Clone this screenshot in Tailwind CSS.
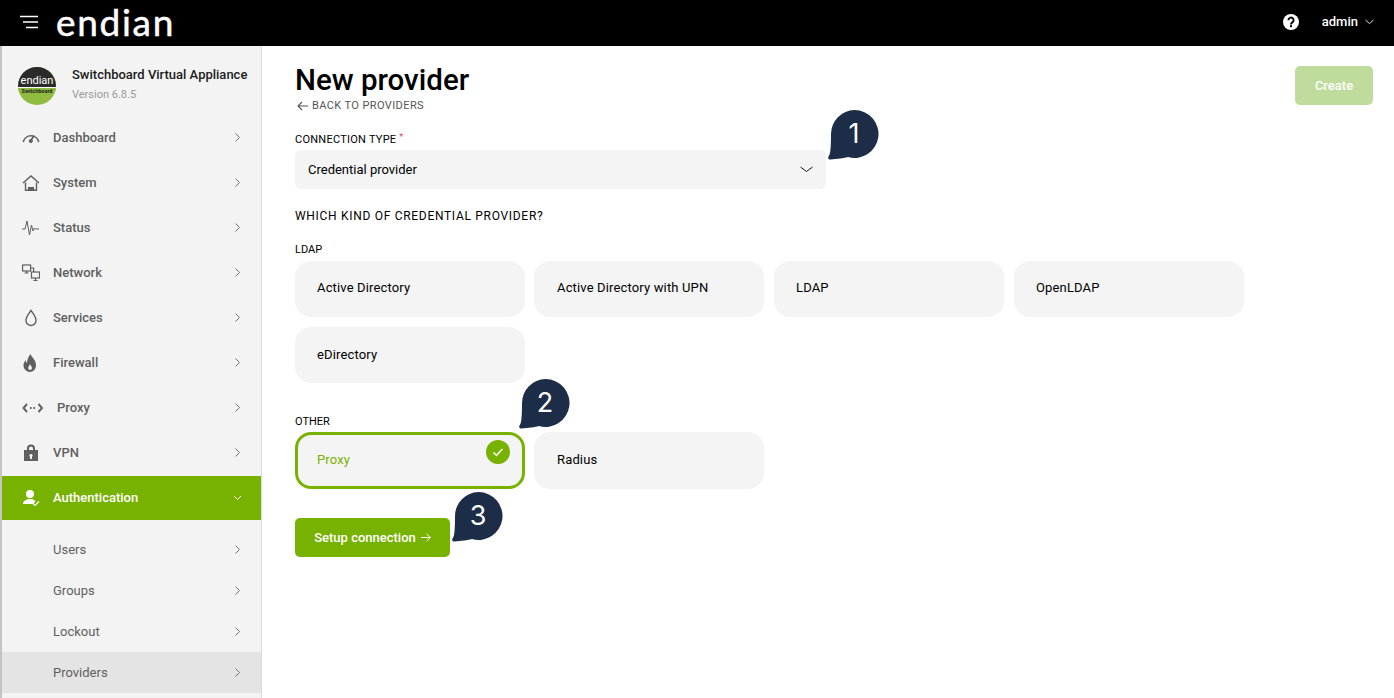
<!DOCTYPE html>
<html lang="en">
<head>
  <meta charset="UTF-8">
  <title>New provider - Endian Switchboard</title>
  <script src="https://cdn.jsdelivr.net/npm/@tailwindcss/browser@4"></script>
</head>
<body class="h-[698px] overflow-hidden bg-white font-['Roboto',sans-serif] text-black">
  <!-- Top bar -->
  <header class="h-[46px] pb-[3px] bg-black flex items-center text-white">
    <svg class="ml-[20px] w-[18px] h-[14px]" viewBox="0 0 18 14" fill="none" stroke="#fff" stroke-width="1.5"><path d="M0 1.5h18M3 7h15M6 12.5h12"/></svg>
    <span class="ml-[18px] text-[37px] leading-[37px] font-['Lato',sans-serif] font-normal tracking-[1.7px] [-webkit-text-stroke:0.5px_white]">endian</span>
    <div class="ml-auto flex items-center">
      <svg class="w-[16px] h-[16px]" viewBox="0 0 16 16"><circle cx="8" cy="8" r="8" fill="#fff"/><path d="M5.4 6.2a2.6 2.6 0 1 1 4 2.2c-.9.6-1.4 1-1.4 2" fill="none" stroke="#000" stroke-width="1.9"/><rect x="7" y="11.2" width="2" height="2" fill="#000"/></svg>
      <span class="ml-[23px] text-[13px] font-medium">admin</span>
      <svg class="ml-[7px] mr-[20px] w-[9px] h-[6px]" viewBox="0 0 9 6" fill="none" stroke="#ddd" stroke-width="1"><path d="M.5 1l4 3.6 4-3.6"/></svg>
    </div>
  </header>

  <div class="flex h-[652px]">
    <!-- Sidebar -->
    <aside class="w-[262px] shrink-0 bg-[#f3f3f3] border-l-2 border-r border-l-[#c4c4c4] border-r-[#dcdcdc] text-[#5f5f5f] text-[13px]">
      <div class="h-[69px] flex items-start pt-[21px] pl-[16px]">
        <div class="relative w-[38px] h-[38px] rounded-full overflow-hidden bg-[#8fbc3f] shrink-0">
          <div class="h-[20px] bg-[#2b2b2b] flex items-end justify-center text-white text-[11px] leading-[13px]">endian</div>
          <div class="h-[6px] bg-[#8fbc3f] text-[#222] text-[5.5px] leading-[6px] font-bold text-center border-t border-white">Switchboard</div>
        </div>
        <div class="ml-[16px]">
          <div class="text-[13px] leading-[16px] font-medium text-[#1c1c1c] whitespace-nowrap">Switchboard Virtual Appliance</div>
          <div class="mt-[5px] text-[11px] leading-[14px] text-[#9a9a9a]">Version 6.8.5</div>
        </div>
      </div>
      <nav class="font-medium">
        <a class="h-[45px] flex items-center pl-[20px] pr-[21px]">
          <svg class="w-[18px] h-[18px]" viewBox="0 0 18 18" fill="none" stroke="#5f5f5f"><path d="M1.2 13a8 8 0 0 1 15.6 0" stroke-width="1.6"/><path d="M12 6.5l-3 5" stroke-width="1.6"/><circle cx="8.8" cy="12" r="1.6" fill="#5f5f5f"/></svg>
          <span class="ml-[13px]">Dashboard</span>
          <svg class="ml-auto w-[5px] h-[9px]" viewBox="0 0 5 9" fill="none" stroke="#707070" stroke-width="1"><path d="M.5.5l4 4-4 4"/></svg>
        </a>
        <a class="h-[45px] flex items-center pl-[20px] pr-[21px]">
          <svg class="w-[18px] h-[18px]" viewBox="0 0 18 18" fill="none" stroke="#5f5f5f" stroke-width="1.4"><path d="M1 9l8-7 8 7"/><path d="M3.5 8.5v7.8h11V8.500"/><rect x="6" y="13" width="6" height="3" fill="#5f5f5f" stroke="none"/></svg>
          <span class="ml-[13px]">System</span>
          <svg class="ml-auto w-[5px] h-[9px]" viewBox="0 0 5 9" fill="none" stroke="#707070" stroke-width="1"><path d="M.5.5l4 4-4 4"/></svg>
        </a>
        <a class="h-[45px] flex items-center pl-[20px] pr-[21px]">
          <svg class="w-[18px] h-[18px]" viewBox="0 0 18 18" fill="none" stroke="#5f5f5f" stroke-width="1"><path d="M0 10h3l2-8 2.500 14 2-10 1.500 6 1.500-3 1 1h3.500"/></svg>
          <span class="ml-[13px]">Status</span>
          <svg class="ml-auto w-[5px] h-[9px]" viewBox="0 0 5 9" fill="none" stroke="#707070" stroke-width="1"><path d="M.5.5l4 4-4 4"/></svg>
        </a>
        <a class="h-[45px] flex items-center pl-[20px] pr-[21px]">
          <svg class="w-[18px] h-[18px]" viewBox="0 0 18 18" fill="none" stroke="#5f5f5f" stroke-width="1.200"><rect x=".6" y="1" width="8" height="6"/><path d="M2.500 9h4M4.500 7v2"/><rect x="9.500" y="8" width="8" height="6"/><path d="M11.500 16.500h4M13.500 14v2.500M8.600 4h3v4"/></svg>
          <span class="ml-[13px]">Network</span>
          <svg class="ml-auto w-[5px] h-[9px]" viewBox="0 0 5 9" fill="none" stroke="#707070" stroke-width="1"><path d="M.5.5l4 4-4 4"/></svg>
        </a>
        <a class="h-[45px] flex items-center pl-[20px] pr-[21px]">
          <svg class="w-[18px] h-[18px]" viewBox="0 0 18 18" fill="none" stroke="#5f5f5f" stroke-width="1.400"><path d="M9 1.500c2 3 5 6 5 10a5 5 0 0 1-10 0c0-4 3-7 5-10z"/></svg>
          <span class="ml-[13px]">Services</span>
          <svg class="ml-auto w-[5px] h-[9px]" viewBox="0 0 5 9" fill="none" stroke="#707070" stroke-width="1"><path d="M.5.5l4 4-4 4"/></svg>
        </a>
        <a class="h-[45px] flex items-center pl-[20px] pr-[21px]">
          <svg class="-ml-[1px] mr-[1px] w-[18px] h-[18px]" viewBox="0 0 18 18" fill="#5f5f5f"><path d="M9.500 0c.5 3 5.500 5.500 5.500 11 0 4-2.500 7-6 7s-6.500-3-6.500-6.500c0-2.500 1-4 2.300-5.500 0 1.500.4 2.500 1.200 3C6 6 7.500 2.500 9.500 0zM9 10c-.3 1.500-1.700 2-1.700 4 0 1.200.8 2 1.800 2s1.800-.8 1.800-2c0-1.800-1.500-2.500-1.900-4z"/></svg>
          <span class="ml-[13px]">Firewall</span>
          <svg class="ml-auto w-[5px] h-[9px]" viewBox="0 0 5 9" fill="none" stroke="#707070" stroke-width="1"><path d="M.5.5l4 4-4 4"/></svg>
        </a>
        <a class="h-[45px] flex items-center pl-[20px] pr-[21px]">
          <svg class="w-[22px] h-[18px]" viewBox="0 0 22 18" fill="none" stroke="#5f5f5f" stroke-width="1.900"><path d="M5 5L1.500 9 5 13M16.500 5l3.500 4-3.500 4"/><path d="M8 9h5.500" stroke-dasharray="1.600 1.800"/></svg>
          <span class="ml-[13px]">Proxy</span>
          <svg class="ml-auto w-[5px] h-[9px]" viewBox="0 0 5 9" fill="none" stroke="#707070" stroke-width="1"><path d="M.5.5l4 4-4 4"/></svg>
        </a>
        <a class="h-[46px] flex items-center pb-[1px] pl-[20px] pr-[21px]">
          <svg class="w-[18px] h-[18px]" viewBox="0 0 18 18" fill="#5f5f5f"><path fill-rule="evenodd" d="M5 6V4.500a4 4 0 0 1 8 0V6h3v11H2V6zm2 0h4V4.500a2 2 0 0 0-4 0zm2 4a1.500 1.500 0 0 0-1 2.700V15h2v-2.300A1.500 1.500 0 0 0 9 10z"/></svg>
          <span class="ml-[13px]">VPN</span>
          <svg class="ml-auto w-[5px] h-[9px]" viewBox="0 0 5 9" fill="none" stroke="#707070" stroke-width="1"><path d="M.5.5l4 4-4 4"/></svg>
        </a>
        <a class="h-[44px] flex items-center pl-[20px] pr-[21px] bg-[#78b200] text-white">
          <svg class="w-[18px] h-[18px]" viewBox="0 0 18 18" fill="#fff"><circle cx="8" cy="5" r="4"/><path d="M1 15c0-3 3-4 5-5h4c1.500.5 3 1.500 3.500 2.500L11 15z"/><path d="M11 14.500l2 2 4-4" fill="none" stroke="#fff" stroke-width="1.200"/></svg>
          <span class="ml-[13px]">Authentication</span>
          <svg class="ml-auto -mr-[2px] w-[9px] h-[6px]" viewBox="0 0 9 6" fill="none" stroke="#fff" stroke-width="1"><path d="M1 1l3.500 3.500L8 1"/></svg>
        </a>
      </nav>
      <div class="pt-[9px] font-normal">
        <a class="h-[41px] flex items-center pl-[51px] pr-[21px]">Users<svg class="ml-auto w-[5px] h-[9px]" viewBox="0 0 5 9" fill="none" stroke="#707070" stroke-width="1"><path d="M.5.5l4 4-4 4"/></svg></a>
        <a class="h-[41px] flex items-center pl-[51px] pr-[21px]">Groups<svg class="ml-auto w-[5px] h-[9px]" viewBox="0 0 5 9" fill="none" stroke="#707070" stroke-width="1"><path d="M.5.5l4 4-4 4"/></svg></a>
        <a class="h-[41px] flex items-center pl-[51px] pr-[21px]">Lockout<svg class="ml-auto w-[5px] h-[9px]" viewBox="0 0 5 9" fill="none" stroke="#707070" stroke-width="1"><path d="M.5.5l4 4-4 4"/></svg></a>
        <a class="h-[41px] flex items-center pl-[51px] pr-[21px] bg-[#e4e4e4]">Providers<svg class="ml-auto w-[5px] h-[9px]" viewBox="0 0 5 9" fill="none" stroke="#707070" stroke-width="1"><path d="M.5.5l4 4-4 4"/></svg></a>
      </div>
    </aside>

    <!-- Main -->
    <main class="relative flex-1 pl-[33px] pr-[21px]">
      <div class="flex items-start justify-between pt-[20px]">
        <div>
          <h1 class="-mt-[1px] text-[29.5px] leading-[30px] font-medium">New provider</h1>
          <a class="mt-[4px] flex items-center text-[11px] leading-[14px] text-[#555] tracking-[0.4px]">
            <svg class="mr-[4px] ml-[2px] w-[11px] h-[10px]" viewBox="0 0 11 10" fill="none" stroke="#555" stroke-width="1.100"><path d="M11 5H1M5 1L1 5l4 4"/></svg>BACK TO PROVIDERS
          </a>
        </div>
        <button class="w-[78px] h-[39px] rounded-[5px] bg-[#c0dc9c] text-white text-[13px] font-medium">Create</button>
      </div>

      <div class="mt-[19px] h-[16px] text-[11px] leading-[16px] tracking-[0.25px]">CONNECTION TYPE <span class="relative -top-[3px] text-[#e5484d] text-[9px]">*</span></div>
      <div class="mt-[2px] w-[531px] h-[39px] rounded-[6px] bg-[#f4f4f4] flex items-center pl-[13px] pr-[13px] text-[13px]">
        Credential provider
        <svg class="ml-auto w-[13px] h-[7px]" viewBox="0 0 13 7" fill="none" stroke="#111" stroke-width="1"><path d="M.5 1l6 4.500 6-4.500"/></svg>
      </div>

      <div class="mt-[19px] text-[12px] leading-[16px] tracking-[0.7px]">WHICH KIND OF CREDENTIAL PROVIDER?</div>
      <div class="mt-[18px] text-[11px] leading-[16px]">LDAP</div>
      <div class="mt-[3px] grid grid-cols-[239px_240px_240px_230px] gap-y-[10px] text-[13px] tracking-[0.15px]">
        <div class="w-[230px] h-[56px] rounded-[16px] bg-[#f4f4f4] flex items-center pb-[3px] pl-[22px]">Active Directory</div>
        <div class="w-[230px] h-[56px] rounded-[16px] bg-[#f4f4f4] flex items-center pb-[3px] pl-[23px]">Active Directory with UPN</div>
        <div class="w-[230px] h-[56px] rounded-[16px] bg-[#f4f4f4] flex items-center pb-[3px] pl-[22px]">LDAP</div>
        <div class="w-[230px] h-[56px] rounded-[16px] bg-[#f4f4f4] flex items-center pb-[3px] pl-[22px]">OpenLDAP</div>
        <div class="w-[230px] h-[56px] rounded-[16px] bg-[#f4f4f4] flex items-center pb-[1px] pl-[22px]">eDirectory</div>
      </div>

      <div class="mt-[31px] text-[11px] leading-[16px]">OTHER</div>
      <div class="mt-[2px] grid grid-cols-[239px_240px_240px_230px] text-[13px] tracking-[0.15px]">
        <div class="relative w-[230px] h-[57px] rounded-[16px] bg-[#f4f4f4] border-[3px] border-[#78b200] flex items-center pb-[2px] pl-[19px] text-[#78b200]">
          Proxy
          <svg class="absolute right-[12px] top-[5px] w-[24px] h-[24px]" viewBox="0 0 24 24"><circle cx="12" cy="12" r="12" fill="#78b200"/><path d="M7.500 12.500l3 3 6-6.500" fill="none" stroke="#fff" stroke-width="1.500"/></svg>
        </div>
        <div class="w-[230px] h-[57px] rounded-[16px] bg-[#f4f4f4] flex items-center pb-[2px] pl-[23px]">Radius</div>
      </div>

      <button class="mt-[29px] w-[155px] h-[39px] rounded-[5px] bg-[#78b200] text-white text-[13px] font-medium flex items-center justify-center gap-[5px]">Setup connection
        <svg class="w-[10px] h-[9px]" viewBox="0 0 10 9" fill="none" stroke="#fff" stroke-width="1"><path d="M0 4.500h9.200M5.500.7l3.800 3.800-3.800 3.800"/></svg>
      </button>

      <!-- Numbered callouts -->
      <div class="absolute left-[566px] top-[64px] w-[52px] h-[50px]">
        <svg class="absolute inset-0" width="52" height="50" viewBox="0 0 52 50"><path d="M26.500 0a24 24 0 1 1-6.500 47.100c-4 1-11 2.300-17.500 2.400-2.500 0-2.800-2-1.800-3.200 1.300-1.500 2.300-5 2.300-22.300A24 24 0 0 1 26.500 0z" fill="#1d2d47"/></svg>
        <span class="absolute left-[2px] top-0 w-[48px] h-[48px] flex items-center justify-center text-white text-[27px] font-['Inter',sans-serif]">1</span>
      </div>
      <div class="absolute left-[257px] top-[333px] w-[52px] h-[50px]">
        <svg class="absolute inset-0" width="52" height="50" viewBox="0 0 52 50"><path d="M26.500 0a24 24 0 1 1-6.500 47.100c-4 1-11 2.300-17.500 2.400-2.500 0-2.800-2-1.800-3.200 1.300-1.500 2.300-5 2.300-22.300A24 24 0 0 1 26.500 0z" fill="#1d2d47"/></svg>
        <span class="absolute left-[2px] top-0 w-[48px] h-[48px] flex items-center justify-center text-white text-[27px] font-['Inter',sans-serif]">2</span>
      </div>
      <div class="absolute left-[190px] top-[446px] w-[52px] h-[50px]">
        <svg class="absolute inset-0" width="52" height="50" viewBox="0 0 52 50"><path d="M26.500 0a24 24 0 1 1-6.500 47.100c-4 1-11 2.300-17.500 2.400-2.500 0-2.800-2-1.800-3.200 1.300-1.500 2.300-5 2.300-22.300A24 24 0 0 1 26.500 0z" fill="#1d2d47"/></svg>
        <span class="absolute left-[2px] top-0 w-[48px] h-[48px] flex items-center justify-center text-white text-[27px] font-['Inter',sans-serif]">3</span>
      </div>
    </main>
  </div>
</body>
</html>
